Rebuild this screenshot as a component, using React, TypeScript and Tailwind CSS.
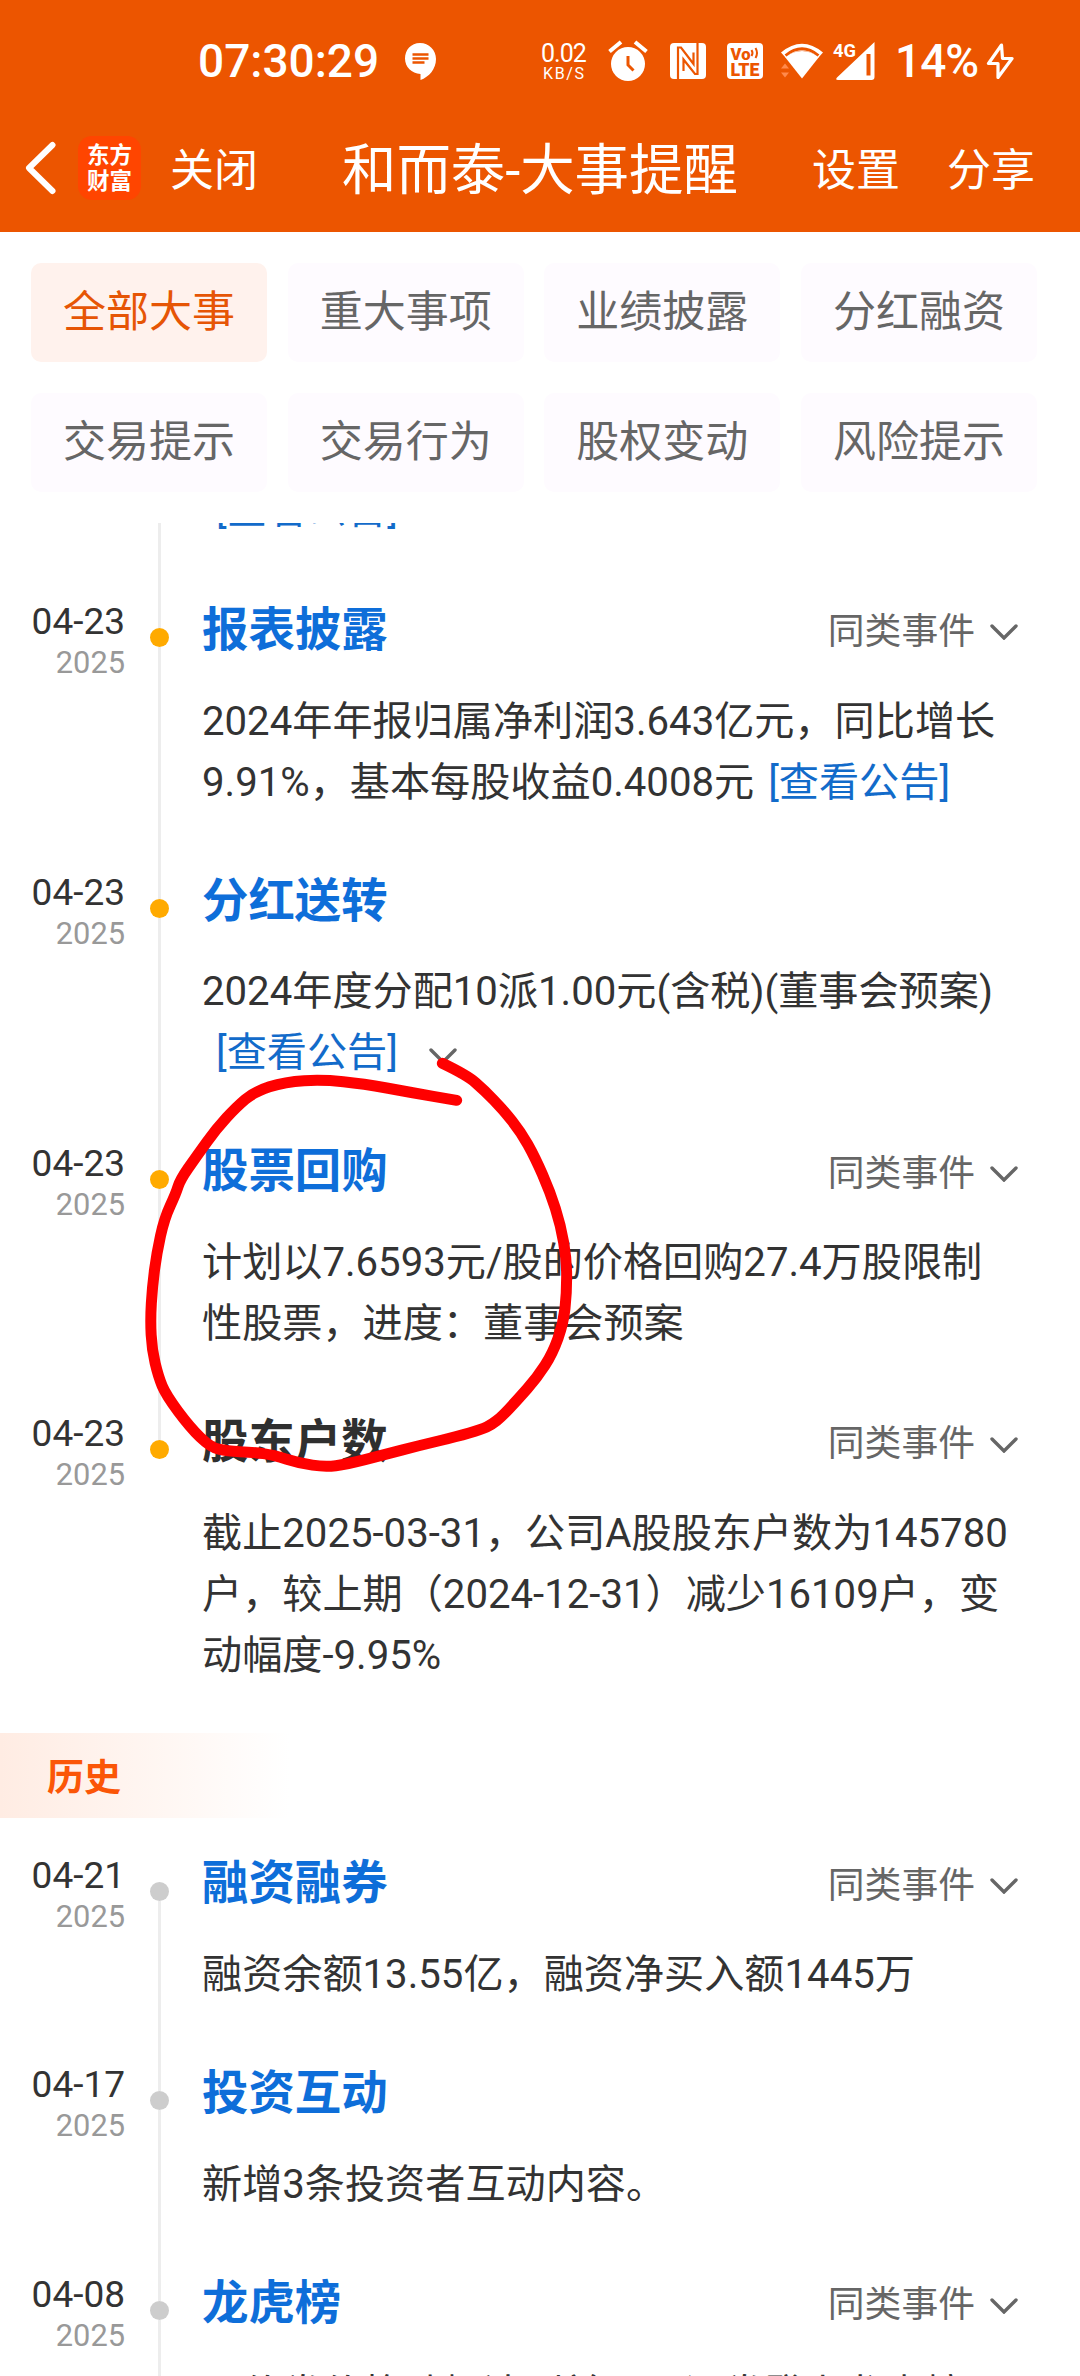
import React from 'react'
import clsx from 'clsx'

interface EventItem {
  date: string
  title: string
  lines: string[]
  plain?: boolean
  more?: boolean
  link?: 'inline' | 'newline'
}

const TABS = ['全部大事', '重大事项', '业绩披露', '分红融资', '交易提示', '交易行为', '股权变动', '风险提示']

const RECENT: EventItem[] = [
  {
    date: '04-23',
    title: '报表披露',
    lines: ['2024年年报归属净利润3.643亿元，同比增长', '9.91%，基本每股收益0.4008元'],
    more: true,
    link: 'inline',
  },
  {
    date: '04-23',
    title: '分红送转',
    lines: ['2024年度分配10派1.00元(含税)(董事会预案)'],
    link: 'newline',
  },
  {
    date: '04-23',
    title: '股票回购',
    lines: ['计划以7.6593元/股的价格回购27.4万股限制', '性股票，进度：董事会预案'],
    more: true,
  },
  {
    date: '04-23',
    title: '股东户数',
    lines: ['截止2025-03-31，公司A股股东户数为145780', '户，较上期（2024-12-31）减少16109户，变', '动幅度-9.95%'],
    plain: true,
    more: true,
  },
]

const HISTORY: EventItem[] = [
  { date: '04-21', title: '融资融券', lines: ['融资余额13.55亿，融资净买入额1445万'], more: true },
  { date: '04-17', title: '投资互动', lines: ['新增3条投资者互动内容。'] },
  { date: '04-08', title: '龙虎榜', lines: ['日价券价格跌幅达到前五只证券登上龙虎榜'], more: true },
]

// hand drawn mark, three units per pixel
const STROKE: [number, number][] = [
  [937, 100], [1010, 135], [1062, 180], [1120, 240], [1172, 305], [1215, 382], [1260, 485], [1292, 585],
  [1310, 690], [1310, 790], [1300, 880], [1268, 970], [1222, 1042], [1160, 1112], [1115, 1160], [1085, 1184],
  [1055, 1198], [980, 1220], [870, 1246], [760, 1275], [650, 1303], [585, 1311], [510, 1300], [430, 1275],
  [370, 1267], [290, 1263], [242, 1252], [180, 1192], [108, 1095], [85, 1040], [66, 960], [61, 870],
  [67, 770], [80, 670], [103, 565], [138, 490], [150, 450], [200, 378], [260, 295], [320, 230],
  [372, 186], [465, 155], [580, 149], [700, 161], [840, 187], [980, 211],
]

function strokePath(points: [number, number][]) {
  let d = `M${points[0][0]} ${points[0][1]}`
  for (let i = 1; i < points.length - 1; i++) {
    const [x, y] = points[i]
    const [nx, ny] = points[i + 1]
    d += ` Q${x} ${y} ${(x + nx) / 2} ${(y + ny) / 2}`
  }
  const last = points[points.length - 1]
  return `${d} L${last[0]} ${last[1]}`
}

function ChevronDown({ className }: { className?: string }) {
  return (
    <svg viewBox="0 0 28 16" className={clsx('w-7 h-4', className)} fill="none" stroke="#666" strokeWidth="3.4" strokeLinecap="round">
      <path d="M2 2l12 12L26 2" />
    </svg>
  )
}

function NoticeLink() {
  return <a className="ml-[14px] text-[#126bca]">[查看公告]</a>
}

function StatusBar() {
  return (
    <div className="flex h-[104px] items-center pt-[18px] pl-[198px]">
      <span className="w-[206px] text-[46px] leading-none font-medium">07:30:29</span>
      <svg viewBox="0 0 32 38" className="w-8 h-[38px]">
        <path fill="#fff" d="M16 1C7 1 1 8 1 16.500c0 8.500 6.500 15 15.500 15.500V38C25 35 32 27 32 17 32 8 25 1 16 1z" />
        <path stroke="#ec5500" strokeWidth="2.400" d="M8.500 12.500h16M8.500 16.500h16M8.500 20.500h12" />
      </svg>

      <div className="ml-[105px] flex w-[67px] flex-col pt-[3px]">
        <span className="text-[25px] leading-[26px] tracking-[-1px]">0.02</span>
        <span className="-mt-[3px] pl-[2px] text-[16px] leading-[20px] tracking-[1.6px]">KB/S</span>
      </div>
      <svg viewBox="0 0 40 42" className="w-10 h-[42px]">
        <circle cx="20" cy="24" r="17" fill="#fff" />
        <path stroke="#fff" strokeWidth="4" d="M1.500 11.500L13 2M38.500 11.500L27 2" />
        <path fill="none" stroke="#ec5500" strokeWidth="3" d="M20 16v9l5.500 5.500" />
      </svg>
      <svg viewBox="0 0 36 36" className="ml-[22px] w-9 h-9">
        <rect width="36" height="36" rx="4" fill="#fff" />
        <path fill="none" stroke="#ec5500" strokeWidth="2.200" d="M8 36V4.500h3L23.500 21V9.500M27.500 0v31h-2.500L13.500 16.500V28" />
      </svg>
      <svg viewBox="0 0 36 36" className="ml-[21px] w-9 h-9 font-['Roboto',sans-serif]">
        <rect width="36" height="36" rx="4" fill="#fff" />
        <text x="3.500" y="16.500" fontSize="16.500" fontWeight="900" fill="#ec5500" textLength="20" lengthAdjust="spacingAndGlyphs">Vo</text>
        <text x="3.500" y="32.500" fontSize="17.500" fontWeight="900" fill="#ec5500" textLength="29" lengthAdjust="spacingAndGlyphs">LTE</text>
        <path fill="none" stroke="#ec5500" strokeWidth="2" d="M24.500 7q2 3 0 6M28.500 5q3 5 0 10" />
      </svg>
      <svg viewBox="0 0 44 36" className="ml-[17px] w-11 h-9">
        <path fill="#fff" d="M1 9.500Q22-8 43 9.500L38.500 14.500Q22 1 5.500 14.500z" />
        <path fill="#fff" d="M5 14Q22 2 39 14L22 35.500z" />
        <path fill="none" stroke="#ec5500" strokeWidth="2.800" d="M5.500 12.500Q22-1 38.500 12.500" />
        <path fill="#ff8a4c" d="M1 25.500l4-5 4 5zM1 29.500h8l-4 5z" />
      </svg>
      <svg viewBox="0 0 43 38" className="ml-2 w-[43px] h-[38px] font-['Roboto',sans-serif]">
        <path fill="#fff" fillRule="evenodd" d="M42.500 0v35q0 3-3 3H6q-3 0-1-2.500zM34.500 12v21.500h4V12z" />
        <text x="1" y="15" fontSize="19" fontWeight="700" fill="#fff" textLength="23" lengthAdjust="spacingAndGlyphs">4G</text>
      </svg>
      <span className="ml-[20px] w-[91px] text-[46px] leading-none font-medium tracking-[-1px]">14%</span>
      <svg viewBox="0 0 28 38" className="w-7 h-[38px]" fill="none" stroke="#fff" strokeWidth="3.200" strokeLinejoin="round">
        <path d="M15.500 3L2.500 21.500h9.500L12 35.500 26 16.500H16.500z" />
      </svg>
    </div>
  )
}

function NavBar() {
  return (
    <div className="flex h-32 items-center text-[44px] leading-none">
      <svg viewBox="0 0 32 54" className="ml-6 w-8 h-[54px]" fill="none" stroke="#fff" strokeWidth="6" strokeLinecap="round" strokeLinejoin="round">
        <path d="M28.500 4L5 27l23.500 23" />
      </svg>
      <div className="ml-[22px] flex h-16 w-[63px] flex-col items-center justify-center rounded-[14px] bg-[#ff4500] text-[22.500px] leading-[26.500px] font-bold">
        <span>东方</span>
        <span>财富</span>
      </div>
      <span className="ml-[29px] pt-[5px]">关闭</span>
      <h1 className="ml-[84px] w-[470px] pt-[7px] text-[54.400px]">和而泰-大事提醒</h1>
      <span className="pt-[5px]">设置</span>
      <span className="ml-[47px] pt-[5px]">分享</span>
    </div>
  )
}

function TimelineItem({ item, past, first, last }: { item: EventItem; past?: boolean; first?: boolean; last?: boolean }) {
  return (
    <div className="flex">
      <div className="w-[125px] shrink-0 pt-3 text-right">
        <div className="text-[37px] leading-[40px] text-[#333]">{item.date}</div>
        <div className="text-[30.800px] leading-[42px] text-[#999]">2025</div>
      </div>
      <div className="ml-[25px] flex w-[19px] shrink-0 flex-col items-center">
        <div className={clsx('h-[38px] w-[3px]', !first && 'bg-[#ededed]')} />
        <div className={clsx('size-[19px] shrink-0 rounded-full', past ? 'bg-[#cdcdcd]' : 'bg-[#ffaa00]')} />
        <div className={clsx('w-[3px] flex-1', !last && 'bg-[#ededed]')} />
      </div>
      <div className="ml-[33px] flex-1 pt-[10px] pb-[48.300px]">
        <div className="flex h-[60px] items-center justify-between pr-[62px]">
          <h2 className={clsx('text-[46.400px] leading-none font-bold', item.plain ? 'text-[#2f2f2f]' : 'text-[#0e6ed9]')}>{item.title}</h2>
          {item.more && (
            <div className="flex items-center pt-[5px] text-[36.800px] leading-none text-[#666]">
              同类事件
              <ChevronDown className="ml-[15px]" />
            </div>
          )}
        </div>
        <div className="mt-[30.500px] text-[40.150px] leading-[61px] whitespace-nowrap text-[#333]">
          {item.lines.map((line, i) => (
            <p key={line}>
              {line}
              {item.link === 'inline' && i === item.lines.length - 1 && <NoticeLink />}
            </p>
          ))}
          {item.link === 'newline' && (
            <p className="flex items-center">
              <NoticeLink />
              <ChevronDown className="ml-[31px] mt-[6px]" />
            </p>
          )}
        </div>
      </div>
    </div>
  )
}

export default function App() {
  return (
    <div className="relative h-[2376px] w-[1080px] overflow-hidden bg-white font-['Roboto','Noto_Sans_CJK_SC',sans-serif]">
      <header className="h-[232px] bg-[#ec5500] text-white">
        <StatusBar />
        <NavBar />
      </header>

      <nav className="grid h-[291px] grid-cols-4 content-start gap-x-[20.500px] gap-y-[31px] pt-[31px] pr-[43px] pl-[31px]">
        {TABS.map((tab, i) => (
          <button
            key={tab}
            className={clsx(
              'h-[99px] rounded-[10px] text-[43px] leading-none',
              i === 0 ? 'bg-[#fff2ed] text-[#e65505]' : 'bg-[#fefbff] text-[#666]'
            )}
          >
            {tab}
          </button>
        ))}
      </nav>

      <main className="h-[1853px] overflow-hidden">
        <div className="flex h-[67px]">
          <div className="ml-[158px] w-[3px] bg-[#ededed]" />
          <p className="-mt-11 ml-[41px] text-[40.150px] leading-[61px]">
            <NoticeLink />
          </p>
        </div>
        {RECENT.map((item, i) => (
          <TimelineItem key={item.title} item={item} last={i === RECENT.length - 1} />
        ))}
        <div className="-mt-px mb-[26px] flex h-[84.500px] items-center bg-linear-to-r from-[#ffece3] to-white to-[290px] pt-[6px] pl-[47px] text-[37px] leading-none font-bold text-[#fb5607]">
          历史
        </div>
        {HISTORY.map((item, i) => (
          <TimelineItem key={item.title} item={item} past first={i === 0} />
        ))}
      </main>

      <svg viewBox="0 0 1380 1380" className="absolute top-[1030px] left-[130px] size-[460px]" fill="none" stroke="#ff0000" strokeWidth="33" strokeLinecap="round" strokeLinejoin="round">
        <path d={strokePath(STROKE)} />
      </svg>
    </div>
  )
}
